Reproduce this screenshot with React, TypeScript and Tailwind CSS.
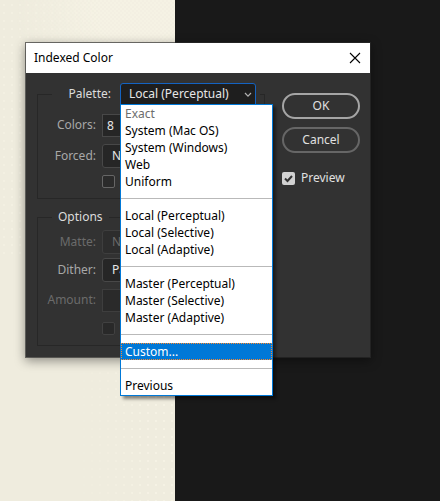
import type { ReactNode } from "react";

type Entry = { label: string; disabled?: boolean; selected?: boolean } | null;

const entries: Entry[] = [
  { label: "Exact", disabled: true },
  { label: "System (Mac OS)" },
  { label: "System (Windows)" },
  { label: "Web" },
  { label: "Uniform" },
  null,
  { label: "Local (Perceptual)" },
  { label: "Local (Selective)" },
  { label: "Local (Adaptive)" },
  null,
  { label: "Master (Perceptual)" },
  { label: "Master (Selective)" },
  { label: "Master (Adaptive)" },
  null,
  { label: "Custom...", selected: true },
  null,
  { label: "Previous" },
];

// The dithered canvas of the open document: sparse dots that thicken towards the upper right.
function DitheredCanvas() {
  return (
    <svg className="block h-full w-full" preserveAspectRatio="none" aria-hidden="true">
      <defs>
        <pattern id="sparse" width="8" height="8" patternUnits="userSpaceOnUse">
          <rect x="3" y="4" width="2" height="2" fill="#f5f2e4" />
        </pattern>
        <pattern id="dense" width="4" height="4" patternUnits="userSpaceOnUse">
          <path d="M0 0h2v2H0zM2 2h2v2H2z" fill="#f5f2e4" />
        </pattern>
        <radialGradient id="glow" gradientUnits="userSpaceOnUse" cx="135" cy="10" r="120">
          <stop offset="0.3" stopColor="#fff" />
          <stop offset="1" stopColor="#000" />
        </radialGradient>
        <linearGradient id="edge" x1="0" x2="1" y1="0" y2="0">
          <stop offset="0.4" stopColor="#000" />
          <stop offset="0.9" stopColor="#fff" />
        </linearGradient>
        <mask id="glowMask">
          <rect width="100%" height="100%" fill="url(#glow)" />
        </mask>
        <mask id="edgeMask">
          <rect width="100%" height="100%" fill="url(#edge)" />
        </mask>
      </defs>
      <rect width="100%" height="100%" fill="#efecde" />
      <rect width="100%" height="260" fill="url(#sparse)" opacity="0.7" />
      <rect y="370" width="100%" height="100%" fill="url(#sparse)" mask="url(#edgeMask)" />
      <g mask="url(#glowMask)">
        <rect width="100%" height="130" fill="#f5f2e4" opacity="0.6" />
        <rect width="100%" height="130" fill="url(#dense)" />
      </g>
    </svg>
  );
}

function PaletteMenu() {
  return (
    <ul
      role="listbox"
      aria-label="Palette"
      className="absolute left-0 top-[21px] z-10 w-[153px] border border-[#0078d7] bg-white pb-px text-black shadow-[3px_3px_3px_rgba(0,0,0,0.45)]"
    >
      {entries.map((entry, i) =>
        entry === null ? (
          <li key={i} role="separator" className="flex h-[17px] items-center">
            <span className="h-px w-full bg-[#b9b9b9]" />
          </li>
        ) : (
          <li
            key={i}
            role="option"
            aria-selected={!!entry.selected}
            aria-disabled={!!entry.disabled}
            className={
              entry.selected
                ? "h-[17px] border border-dotted border-[#ff8728] bg-[#0078d7] pl-[3px] leading-[15px] text-white"
                : entry.disabled
                  ? "h-[17px] pl-1 leading-[17px] text-[#6d6d6d]"
                  : "h-[17px] pl-1 leading-[17px]"
            }
          >
            {entry.label}
          </li>
        ),
      )}
    </ul>
  );
}

function Row({ id, label, dim, children }: { id: string; label: string; dim?: boolean; children: ReactNode }) {
  return (
    <div className="flex h-6 items-center gap-[6px]">
      <label
        htmlFor={id}
        className={
          dim ? "w-[52px] shrink-0 text-right text-[#6b6b6b]" : "w-[52px] shrink-0 text-right text-[#a8a8a8]"
        }
      >
        {label}
      </label>
      {children}
    </div>
  );
}

const selectStyle =
  "h-6 w-[120px] appearance-none rounded-[3px] border border-[#484848] bg-[#262626] px-[9px] text-[#e6e6e6] outline-none disabled:border-[#3e3e3e] disabled:bg-[#2d2d2d] disabled:text-[#6b6b6b] disabled:opacity-100";
const inputStyle =
  "h-[23px] w-[60px] border border-[#484848] bg-[#262626] px-1 text-[#e6e6e6] outline-none disabled:border-[#3e3e3e] disabled:bg-[#2a2a2a]";
const boxStyle =
  "ml-[58px] size-[13px] appearance-none rounded-[2px] border border-[#666] bg-[#2b2b2b] disabled:border-[#414141] disabled:bg-[#292929]";

export default function App() {
  return (
    <main className="relative flex h-screen overflow-hidden font-['Noto_Sans','Open_Sans',sans-serif] text-[12px]">
      <div className="w-[175px]">
        <DitheredCanvas />
      </div>
      <div className="flex-1 bg-[#191919]" />

      <section
        role="dialog"
        aria-labelledby="title"
        className="absolute left-[25px] top-[42px] w-[346px] border border-[rgba(45,45,45,0.65)] bg-[#323232] bg-clip-padding shadow-[0_3px_10px_rgba(0,0,0,0.4)]"
      >
        <header className="flex h-[30px] items-center justify-between bg-white pl-2 pr-[9px] text-black">
          <h1 id="title">Indexed Color</h1>
          <button type="button" aria-label="Close">
            <svg width="12" height="12" viewBox="0 0 12 12" fill="none" stroke="currentColor" strokeWidth="1.1">
              <path d="M1 1l10 10M11 1L1 11" />
            </svg>
          </button>
        </header>

        <div className="flex items-start justify-between pb-[11px] pl-[11px] pr-[10px] pt-[10px]">
          <div className="flex w-[228px] flex-col">
            <fieldset className="h-[116px] border border-[#272727] pl-[6px]">
              <legend className="ml-2 flex h-[22px] items-center pr-1">
                <label htmlFor="palette" className="w-[68px] pr-[9px] text-right text-[#dcdcdc]">
                  Palette:
                </label>
                <div className="relative">
                  <select
                    id="palette"
                    className="block h-[22px] w-[136px] appearance-none rounded-t-[3px] border border-[#1463c2] bg-[#1e1e1e] px-2 text-[#e6e6e6] outline-none"
                  >
                    <option>Local (Perceptual)</option>
                  </select>
                  <svg
                    className="pointer-events-none absolute right-1 top-[9px]"
                    width="8"
                    height="6"
                    viewBox="0 0 8 6"
                    fill="none"
                    stroke="#b0b0b0"
                    strokeWidth="1.2"
                  >
                    <path d="M1 1l3 3.2L7 1" />
                  </svg>
                  <PaletteMenu />
                </div>
              </legend>
              <div className="flex flex-col gap-[7px] pt-2">
                <Row id="colors" label="Colors:">
                  <input id="colors" className={inputStyle} defaultValue="8" />
                </Row>
                <Row id="forced" label="Forced:">
                  <select id="forced" className={selectStyle}>
                    <option>None</option>
                  </select>
                </Row>
                <input type="checkbox" aria-label="Transparency" className={boxStyle} />
              </div>
            </fieldset>

            <fieldset className="mt-[9px] h-[138px] border border-[#272727] pl-[6px]">
              <legend className="ml-2 h-[18px] px-[6px] leading-[18px] text-[#dcdcdc]">Options</legend>
              <div className="flex flex-col gap-1 pt-1">
                <Row id="matte" label="Matte:" dim>
                  <select id="matte" className={selectStyle} disabled>
                    <option>None</option>
                  </select>
                </Row>
                <Row id="dither" label="Dither:">
                  <select id="dither" className={selectStyle}>
                    <option>Pattern</option>
                  </select>
                </Row>
                <div className="flex flex-col gap-[10px] pt-[2px]">
                  <Row id="amount" label="Amount:" dim>
                    <input id="amount" className={inputStyle} disabled />
                  </Row>
                  <input type="checkbox" aria-label="Preserve Exact Colors" disabled className={boxStyle} />
                </div>
              </div>
            </fieldset>
          </div>

          <div className="flex w-[78px] flex-col gap-2 pt-[10px] text-[#e0e0e0]">
            <button type="button" className="h-[26px] rounded-full border-2 border-[#a5a5a5]">
              OK
            </button>
            <button type="button" className="h-[26px] rounded-full border-2 border-[#666]">
              Cancel
            </button>
            <label className="mt-2 flex h-[18px] items-center gap-[6px]">
              <span className="relative flex">
                <input
                  type="checkbox"
                  defaultChecked
                  className="size-[13px] appearance-none rounded-[2px] bg-[#d2d2d2]"
                />
                <svg
                  className="pointer-events-none absolute inset-0"
                  width="13"
                  height="13"
                  viewBox="0 0 13 13"
                  fill="none"
                  stroke="#323232"
                  strokeWidth="2"
                >
                  <path d="M3 6.5l2.5 2.5L10 4" />
                </svg>
              </span>
              Preview
            </label>
          </div>
        </div>
      </section>
    </main>
  );
}
